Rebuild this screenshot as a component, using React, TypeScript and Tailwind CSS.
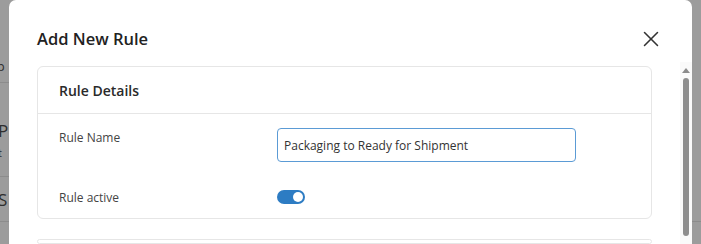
import { X } from "lucide-react";

function BackdropStrip() {
  return (
    <div className="relative w-[9px] shrink-0 overflow-hidden text-[#2e2e2e]">
      <div className="absolute left-[-11px] top-[57px] text-[13px]">op</div>
      <div className="absolute left-0 top-[82px] h-px w-full bg-[#8c8c8c]" />
      <div className="absolute left-[-2px] top-[118px] text-[17px]">P</div>
      <div className="absolute left-[-8px] top-[145px] text-[11px]">at</div>
      <div className="absolute left-0 top-[176px] h-px w-full bg-[#8c8c8c]" />
      <div className="absolute left-[-2px] top-[187px] text-[17px]">S</div>
      <div className="absolute left-0 top-[221px] h-px w-full bg-[#8c8c8c]" />
    </div>
  );
}

function Toggle({ on }: { on: boolean }) {
  return (
    <span
      className={
        on
          ? "flex h-[14px] w-[28px] items-center justify-end rounded-full bg-[#2d7cc3] px-[2px]"
          : "flex h-[14px] w-[28px] items-center justify-start rounded-full bg-gray-300 px-[2px]"
      }
    >
      <span className="h-[10px] w-[10px] rounded-full bg-white" />
    </span>
  );
}

export default function App() {
  return (
    <div
      className="flex h-[244px] w-[701px] overflow-hidden bg-[#9c9c9c]"
      style={{ fontFamily: '"Open Sans", "Noto Sans", sans-serif' }}
    >
      <BackdropStrip />

      {/* Modal */}
      <div className="flex w-[683px] shrink-0 flex-col rounded-t-[7px] bg-white">
        <div className="flex h-[62px] items-center justify-between pl-[28px] pr-[28px] pt-[16px]">
          <h2 className="text-[16.5px] font-semibold text-[#222]">Add New Rule</h2>
          <X className="h-[26px] w-[26px] text-[#333]" strokeWidth={1.4} />
        </div>

        <div className="flex flex-1 overflow-hidden">
          <div className="flex flex-1 flex-col gap-[20px] pl-[28px] pr-[28px] pt-[4px]">
            <div className="rounded-[6px] border border-[#e6e6e6]">
              <div className="flex h-[47px] items-center border-b border-[#e6e6e6] px-[21px]">
                <span className="text-[14px] font-semibold text-[#2a2a2a]">Rule Details</span>
              </div>
              <div className="flex flex-col gap-[25px] px-[21px] pb-[11px] pt-[14px]">
                <div className="flex items-start">
                  <label className="w-[218px] pt-[1px] text-[12px] text-[#444]">Rule Name</label>
                  <input
                    readOnly
                    value="Packaging to Ready for Shipment"
                    className="h-[34px] w-[299px] rounded-[4px] border border-[#5b9bd5] px-[6px] text-[12px] text-[#333] outline-none"
                  />
                </div>
                <div className="flex h-[20px] items-center">
                  <label className="w-[218px] pt-[2px] text-[12px] text-[#444]">Rule active</label>
                  <Toggle on />
                </div>
              </div>
            </div>
            <div className="h-[40px] rounded-[6px] border border-[#e6e6e6]" />
          </div>

          {/* Scrollbar */}
          <div className="flex w-[12px] flex-col items-center bg-[#fafafa] pt-[6px]">
            <div className="h-0 w-0 border-x-[4px] border-b-[5px] border-x-transparent border-b-[#8c8c8c]" />
            <div className="mt-[5px] h-[158px] w-[6px] rounded-full bg-[#8e8e8e]" />
          </div>
        </div>
      </div>

      <div className="relative flex-1">
        <div className="absolute left-0 top-[221px] h-px w-full bg-[#8c8c8c]" />
      </div>
    </div>
  );
}
